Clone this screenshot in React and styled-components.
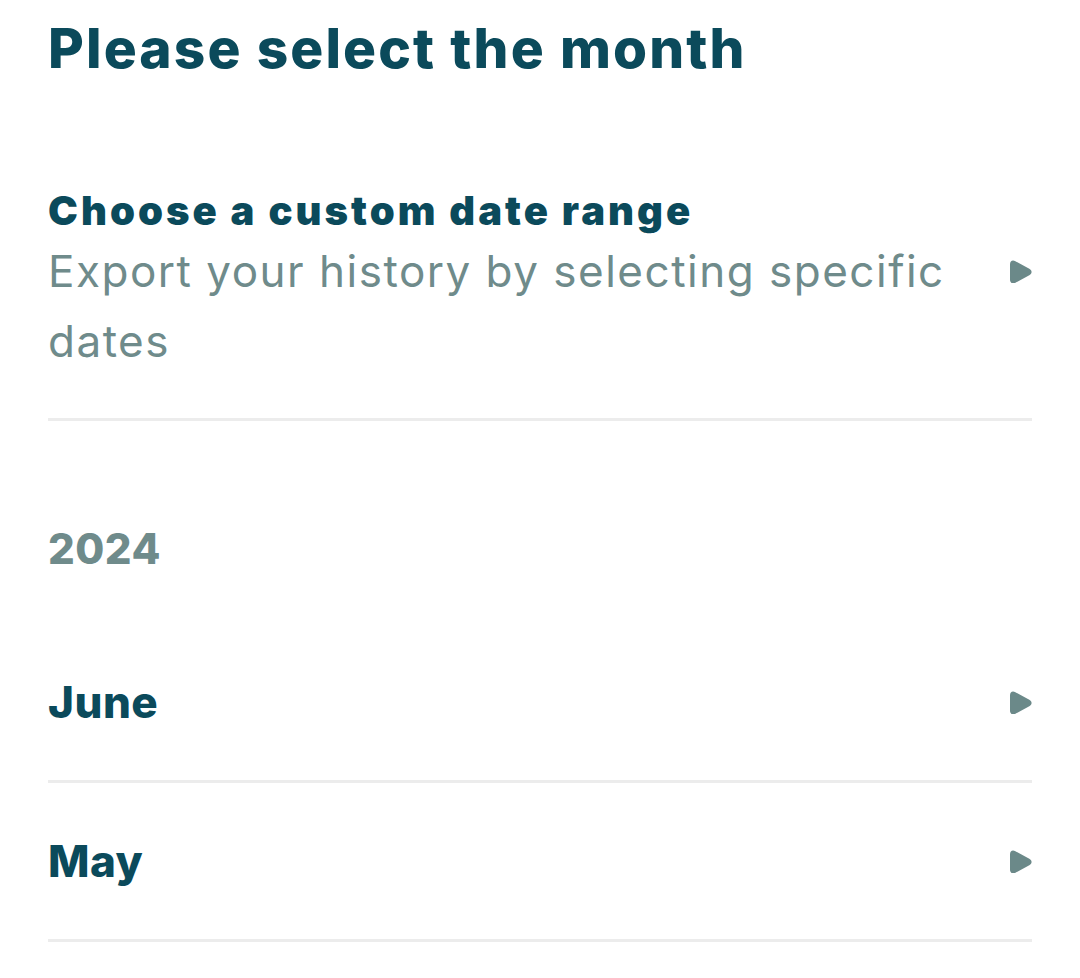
import React from "react";
import styled, { createGlobalStyle } from "styled-components";

const GlobalStyle = createGlobalStyle`
  body {
    margin: 0;
    background: #ffffff;
    font-family: Inter, "Noto Sans", sans-serif;
  }
`;

const months = ["June", "May"];

function PlayIcon() {
  return (
    <svg width="24" height="24" viewBox="0 0 24 24">
      <path
        d="M1 5.4C1 2 3.5 0.6 6.4 2.3l13.9 7.5c3 1.6 3 4.8 0 6.4L6.4 23.7C3.5 25.4 1 24 1 20.6z"
        fill="#6b8989"
      />
    </svg>
  );
}

export default function App() {
  return (
    <Page>
      <GlobalStyle />
      <Title>Please select the month</Title>
      <CustomRow>
        <CustomText>
          <CustomTitle>Choose a custom date range</CustomTitle>
          <CustomSub>Export your history by selecting specific dates</CustomSub>
        </CustomText>
        <IconWrap top>
          <PlayIcon />
        </IconWrap>
      </CustomRow>
      <Year>2024</Year>
      {months.map(month => (
        <MonthRow key={month}>
          <MonthName>{month}</MonthName>
          <IconWrap>
            <PlayIcon />
          </IconWrap>
        </MonthRow>
      ))}
    </Page>
  );
}

const Page = styled.main`
  padding: 12px 48px 0;
  color: #0b4a5b;
`;

const Title = styled.h1`
  margin: 0;
  font-size: 55px;
  font-weight: 800;
  line-height: 72px;
  letter-spacing: 2.1px;
`;

const CustomRow = styled.section`
  display: flex;
  align-items: flex-start;
  justify-content: space-between;
  margin-top: 102px;
  padding-bottom: 42px;
  border-bottom: 3px solid #ececec;
`;

const CustomText = styled.div`
  display: flex;
  flex-direction: column;
  max-width: 920px;
`;

const CustomTitle = styled.h2`
  margin: 0;
  font-size: 40px;
  font-weight: 900;
  line-height: 50px;
  letter-spacing: 3px;
`;

const CustomSub = styled.p`
  margin: 0;
  font-size: 44px;
  font-weight: 400;
  line-height: 70px;
  letter-spacing: 1.5px;
  color: #6f8b8b;
`;

const IconWrap = styled.div`
  display: flex;
  align-items: center;
  align-self: ${props => (props.top ? "flex-start" : "center")};
  margin-top: ${props => (props.top ? "73px" : "0")};
  margin-right: -1px;
`;

const Year = styled.h3`
  margin: 98px 0 45px;
  font-size: 42px;
  font-weight: 800;
  line-height: 60px;
  letter-spacing: 0.5px;
  color: #6f8b8b;
`;

const MonthRow = styled.section`
  display: flex;
  align-items: center;
  justify-content: space-between;
  height: 156px;
  border-bottom: 3px solid #ececec;
`;

const MonthName = styled.div`
  font-size: 44px;
  font-weight: 800;
  letter-spacing: 0.5px;
`;
